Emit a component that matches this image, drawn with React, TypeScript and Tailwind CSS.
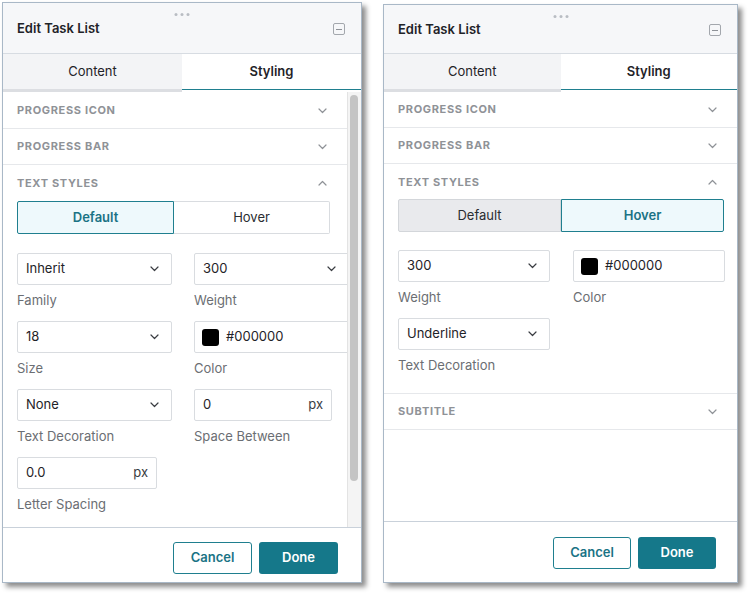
import React from "react";

const Chevron = ({ up = false, className = "" }: { up?: boolean; className?: string }) => (
  <svg width="9" height="6" viewBox="0 0 9 6" className={className} fill="none">
    {up ? (
      <path d="M1 5L4.5 1.5L8 5" stroke="currentColor" strokeWidth="1.2" strokeLinecap="round" strokeLinejoin="round" />
    ) : (
      <path d="M1 1L4.5 4.5L8 1" stroke="currentColor" strokeWidth="1.2" strokeLinecap="round" strokeLinejoin="round" />
    )}
  </svg>
);

const Header = ({ h }: { h: string }) => (
  <div className={`relative ${h} shrink-0 bg-[#f6f7f9] border-b border-[#d7dce2] flex items-center justify-between pl-[14px] pr-[16px]`}>
    <div className="absolute left-1/2 top-[10px] -translate-x-1/2 flex gap-[3px]">
      <span className="w-[3px] h-[3px] rounded-full bg-[#b9bdc3]" />
      <span className="w-[3px] h-[3px] rounded-full bg-[#b9bdc3]" />
      <span className="w-[3px] h-[3px] rounded-full bg-[#b9bdc3]" />
    </div>
    <span className="text-[13px] font-semibold text-[#1f2328] mt-[2px]">Edit Task List</span>
    <div className="w-[12px] h-[12px] border border-[#a3a7ad] rounded-[2px] flex items-center justify-center mt-[2px]">
      <span className="w-[6px] h-[1px] bg-[#8e9298]" />
    </div>
  </div>
);

const Tabs = ({ h }: { h: string }) => (
  <div className={`${h} shrink-0 flex`}>
    <div className="flex-1 bg-[#f3f4f6] border-b-[3px] border-[#dcdee2] flex items-center justify-center text-[13px] text-[#1f2328]">
      Content
    </div>
    <div className="flex-1 bg-white border-b-[2px] border-b-white flex flex-col">
      <div className="flex-1 flex items-center justify-center text-[13px] font-semibold text-[#1f2328] border-b border-[#1f7f8f]">
        Styling
      </div>
    </div>
  </div>
);

const SectionRow = ({ label, up = false, border = true }: { label: string; up?: boolean; border?: boolean }) => (
  <div className={`h-[36px] shrink-0 flex items-center justify-between pl-[14px] pr-[20px] ${border ? "border-b border-[#e6e8eb]" : ""}`}>
    <span className="text-[11px] font-bold tracking-[0.06em] text-[#8f9297]">{label}</span>
    <Chevron up={up} className="text-[#8f9297]" />
  </div>
);

const Segmented = ({ active }: { active: "default" | "hover" }) => (
  <div className="flex h-[33px]">
    <div
      className={`flex-1 flex items-center justify-center text-[13px] rounded-l-[2px] border ${
        active === "default"
          ? "bg-[#eef9fc] border-[#1f7f8f] text-[#1a7385] font-semibold"
          : "bg-[#e9eaed] border-[#d3d6da] text-[#2a2d31]"
      }`}
    >
      Default
    </div>
    <div
      className={`flex-1 flex items-center justify-center text-[13px] rounded-r-[2px] border ${
        active === "hover"
          ? "bg-[#eef9fc] border-[#1f7f8f] text-[#1a7385] font-semibold"
          : "bg-white border-[#d9dce0] border-l-0 text-[#2a2d31]"
      }`}
    >
      Hover
    </div>
  </div>
);

const Field = ({ label, children, w }: { label: string; children: React.ReactNode; w: string }) => (
  <div className={`flex flex-col ${w}`}>
    {children}
    <div className="mt-[7px] h-[16px] leading-[16px] text-[13px] text-[#6b6e73]">{label}</div>
  </div>
);

const Select = ({ value }: { value: string }) => (
  <div className="h-[32px] bg-white border border-[#d9dce0] rounded-[2px] flex items-center justify-between pl-[8px] pr-[12px] text-[13px] text-[#1f2328]">
    <span>{value}</span>
    <Chevron className="text-[#3a3d42]" />
  </div>
);

const NumberInput = ({ value }: { value: string }) => (
  <div className="h-[32px] bg-white border border-[#d9dce0] rounded-[2px] flex items-center justify-between pl-[8px] pr-[8px] text-[13px] text-[#1f2328]">
    <span>{value}</span>
    <span className="text-[#3a3d42]">px</span>
  </div>
);

const ColorInput = () => (
  <div className="h-[32px] bg-white border border-[#d9dce0] rounded-[2px] flex items-center gap-[7px] pl-[7px] text-[13px] text-[#1f2328]">
    <span className="w-[17px] h-[17px] rounded-[3px] bg-black" />
    <span>#000000</span>
  </div>
);

const Footer = ({ cls, bw }: { cls: string; bw: string }) => (
  <div className={`${cls} shrink-0 border-t border-[#c9d1da] bg-white flex justify-end gap-[7px]`}>
    <button className={`${bw} h-[32px] rounded-[3px] border border-[#1f7f8f] bg-white text-[13px] font-semibold text-[#1a7385]`}>
      Cancel
    </button>
    <button className={`${bw} h-[32px] rounded-[3px] bg-[#15788a] text-[13px] font-semibold text-white`}>
      Done
    </button>
  </div>
);

export default function App() {
  return (
    <div
      className="w-[754px] h-[598px] bg-white flex items-start pl-[2px] pt-[2px] gap-[21px]"
      style={{ fontFamily: "Inter, 'Noto Sans', sans-serif" }}
    >
      {/* Left panel */}
      <div className="w-[360px] h-[581px] border border-[#a9b8c7] bg-white flex flex-col shadow-[4px_4px_5px_rgba(0,0,0,0.45)]">
        <Header h="h-[51px]" />
        <Tabs h="h-[38px]" />
        <div className="flex-1 flex min-h-0">
          <div className="flex-1 overflow-hidden flex flex-col">
            <div className="h-[1px] shrink-0" />
            <SectionRow label="PROGRESS ICON" />
            <SectionRow label="PROGRESS BAR" />
            <SectionRow label="TEXT STYLES" up border={false} />
            <div className="pl-[14px] pr-[17px]">
              <Segmented active="default" />
            </div>
            <div className="pl-[14px] mt-[19px] flex flex-col gap-[13px]">
              <div className="flex gap-[22px]">
                <Field label="Family" w="w-[155px] shrink-0">
                  <Select value="Inherit" />
                </Field>
                <Field label="Weight" w="w-[155px] shrink-0">
                  <Select value="300" />
                </Field>
              </div>
              <div className="flex gap-[22px]">
                <Field label="Size" w="w-[155px] shrink-0">
                  <Select value="18" />
                </Field>
                <Field label="Color" w="w-[155px] shrink-0">
                  <ColorInput />
                </Field>
              </div>
              <div className="flex gap-[22px]">
                <Field label="Text Decoration" w="w-[155px] shrink-0">
                  <Select value="None" />
                </Field>
                <Field label="Space Between" w="w-[138px] shrink-0">
                  <NumberInput value="0" />
                </Field>
              </div>
              <div className="flex gap-[22px]">
                <Field label="Letter Spacing" w="w-[140px] shrink-0">
                  <NumberInput value="0.0" />
                </Field>
              </div>
            </div>
          </div>
          <div className="w-[14px] shrink-0 bg-[#f4f4f4] border-l border-[#e3e3e3] pt-[3px] pl-[2px]">
            <div className="w-[8px] h-[386px] rounded-full bg-[#c4c4c4]" />
          </div>
        </div>
        <Footer cls="h-[55px] pt-[14px] pr-[23px]" bw="w-[79px]" />
      </div>

      {/* Right panel */}
      <div className="mt-[2px] w-[355px] h-[579px] border border-[#a9b8c7] bg-white flex flex-col shadow-[4px_4px_5px_rgba(0,0,0,0.45)]">
        <Header h="h-[49px]" />
        <Tabs h="h-[38px]" />
        <div className="flex-1 min-h-0 flex flex-col overflow-hidden">
          <SectionRow label="PROGRESS ICON" />
          <SectionRow label="PROGRESS BAR" />
          <SectionRow label="TEXT STYLES" up border={false} />
          <div className="pl-[14px] pr-[13px] -mt-[1px]">
            <Segmented active="hover" />
          </div>
          <div className="pl-[14px] mt-[18px] flex flex-col gap-[13px] pb-[20px] border-b border-[#e6e8eb]">
            <div className="flex gap-[23px]">
              <Field label="Weight" w="w-[152px] shrink-0">
                <Select value="300" />
              </Field>
              <Field label="Color" w="w-[152px] shrink-0">
                <ColorInput />
              </Field>
            </div>
            <div className="flex">
              <Field label="Text Decoration" w="w-[152px] shrink-0">
                <Select value="Underline" />
              </Field>
            </div>
          </div>
          <SectionRow label="SUBTITLE" />
        </div>
        <Footer cls="h-[61px] pt-[15px] pr-[21px]" bw="w-[78px]" />
      </div>
    </div>
  );
}
